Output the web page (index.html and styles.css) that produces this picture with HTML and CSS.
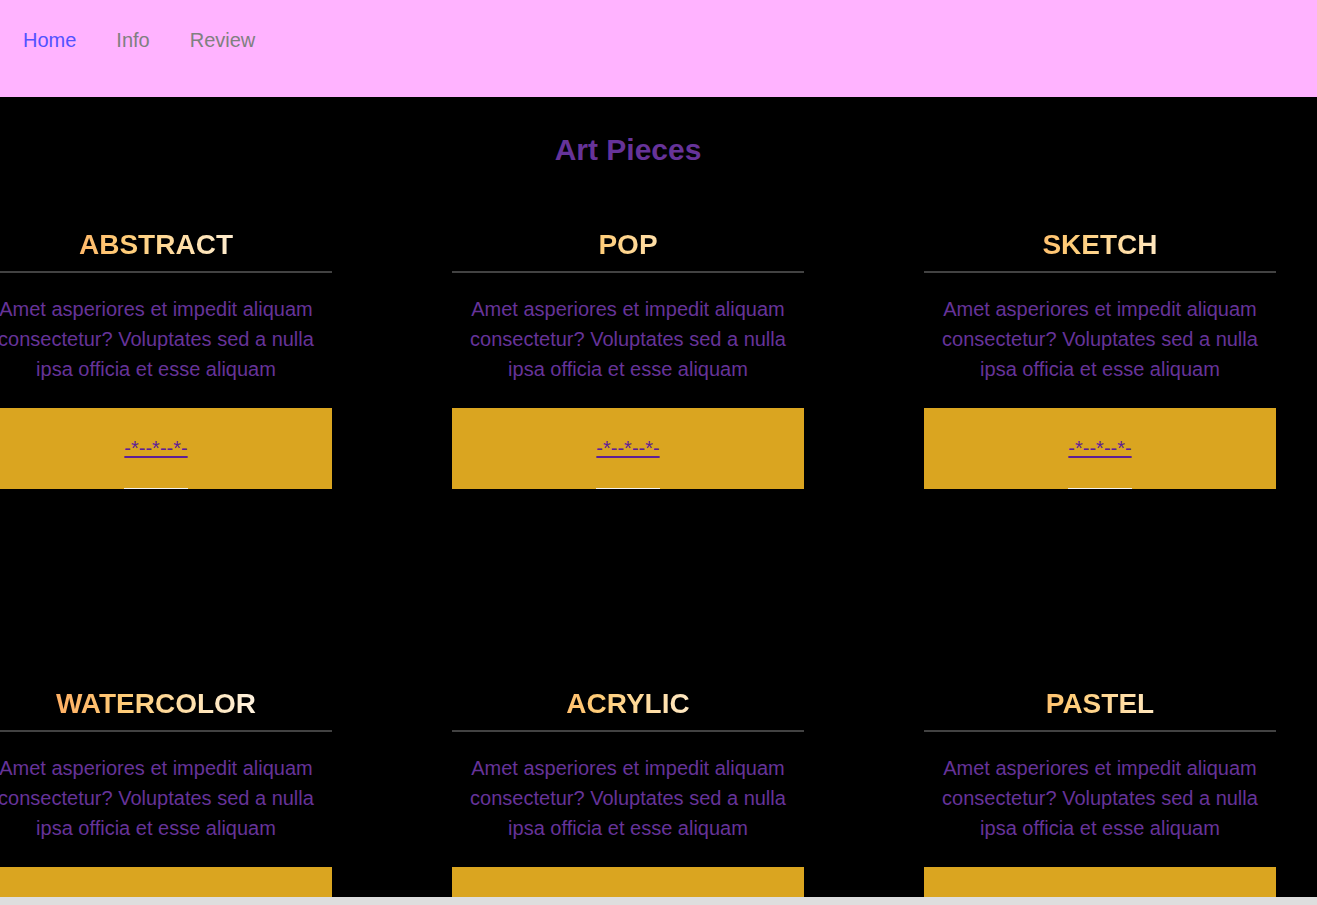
FILE: index.html
```html
<!DOCTYPE html>
<html lang="en">
<head>
<meta charset="utf-8">
<title>Art Pieces</title>
<link rel="stylesheet" href="styles.css">
</head>
<body>
<nav class="nav">
  <a class="nav-link nav-link-active" href="#">Home</a>
  <a class="nav-link" href="#">Info</a>
  <a class="nav-link" href="#">Review</a>
</nav>
<main class="main">
  <h1 class="page-title">Art Pieces</h1>
  <div class="grid">
    <section class="card">
      <h2 class="card-title">ABSTRACT</h2>
      <hr class="card-rule">
      <p class="card-text">Amet asperiores et impedit aliquam consectetur? Voluptates sed a nulla ipsa officia et esse aliquam</p>
      <div class="card-action"><a class="card-link" href="#">-*--*--*-</a></div>
    </section>
    <section class="card">
      <h2 class="card-title">POP</h2>
      <hr class="card-rule">
      <p class="card-text">Amet asperiores et impedit aliquam consectetur? Voluptates sed a nulla ipsa officia et esse aliquam</p>
      <div class="card-action"><a class="card-link" href="#">-*--*--*-</a></div>
    </section>
    <section class="card">
      <h2 class="card-title">SKETCH</h2>
      <hr class="card-rule">
      <p class="card-text">Amet asperiores et impedit aliquam consectetur? Voluptates sed a nulla ipsa officia et esse aliquam</p>
      <div class="card-action"><a class="card-link" href="#">-*--*--*-</a></div>
    </section>
    <section class="card">
      <h2 class="card-title">WATERCOLOR</h2>
      <hr class="card-rule">
      <p class="card-text">Amet asperiores et impedit aliquam consectetur? Voluptates sed a nulla ipsa officia et esse aliquam</p>
      <div class="card-action"><a class="card-link" href="#">-*--*--*-</a></div>
    </section>
    <section class="card">
      <h2 class="card-title">ACRYLIC</h2>
      <hr class="card-rule">
      <p class="card-text">Amet asperiores et impedit aliquam consectetur? Voluptates sed a nulla ipsa officia et esse aliquam</p>
      <div class="card-action"><a class="card-link" href="#">-*--*--*-</a></div>
    </section>
    <section class="card">
      <h2 class="card-title">PASTEL</h2>
      <hr class="card-rule">
      <p class="card-text">Amet asperiores et impedit aliquam consectetur? Voluptates sed a nulla ipsa officia et esse aliquam</p>
      <div class="card-action"><a class="card-link" href="#">-*--*--*-</a></div>
    </section>
  </div>
</main>
<div class="bottom-bar"></div>
</body>
</html>
```

FILE: styles.css
```css
html, body {
  margin: 0;
  padding: 0;
}
body {
  background: #000;
  font-family: "Liberation Sans", Arial, sans-serif;
  overflow: hidden;
}
.nav {
  height: 97px;
  box-sizing: border-box;
  background: #ffb3ff;
  display: flex;
  align-items: flex-start;
  gap: 40px;
  padding: 29px 0 0 23px;
}
.nav-link {
  font-size: 20px;
  line-height: 23px;
  color: #808080;
  text-decoration: none;
}
.nav-link-active {
  color: #5252ff;
}
.main {
  width: 1296px;
  margin-left: -20px;
  padding-top: 36px;
}
.page-title {
  margin: 0;
  text-align: center;
  font-size: 30px;
  line-height: 34px;
  font-weight: bold;
  color: #663399;
}
.grid {
  margin-top: 62px;
  display: grid;
  grid-template-columns: repeat(3, 352px);
  column-gap: 120px;
  row-gap: 199px;
}
.card {
  display: flex;
  flex-direction: column;
  text-align: center;
}
.card-title {
  margin: 0 auto;
  font-size: 28px;
  line-height: 32px;
  font-weight: bold;
  color: #ffd280;
  width: 352px;
  background: linear-gradient(90deg, #ff6f55 0%, #ffb064 22%, #ffcd78 42%, #ffe6bc 65%, #fff6ea 82%, #ffffff 100%);
  -webkit-background-clip: text;
  background-clip: text;
  -webkit-text-fill-color: transparent;
}
.card-rule {
  margin: 10px 0 0;
  border: 0;
  height: 2px;
  background: #424242;
}
.card-text {
  margin: 21px 0 0;
  font-size: 20px;
  line-height: 30px;
  color: #663399;
}
.card-action {
  margin-top: 24px;
  height: 81px;
  box-sizing: border-box;
  background: #daa520;
  padding-top: 29px;
}
.card-link {
  display: inline-block;
  font-size: 20px;
  line-height: 23px;
  color: #5e1f96;
  padding-bottom: 28px;
  border-bottom: 1px solid #f2f2f2;
}
.bottom-bar {
  position: fixed;
  left: 0;
  right: 0;
  bottom: 0;
  height: 8px;
  background: #dedede;
}
```
